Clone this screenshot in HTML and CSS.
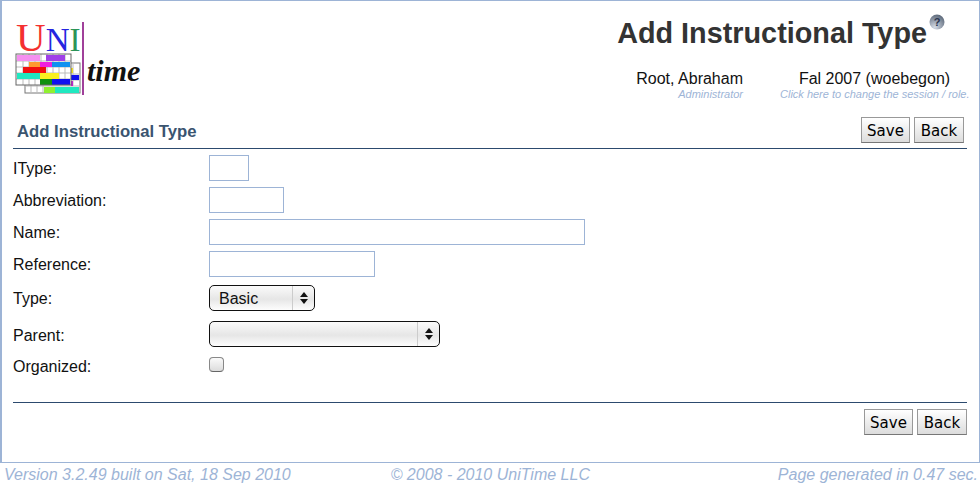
FILE: index.html
```html
<!DOCTYPE html>
<html lang="en">
<head>
    <meta charset="UTF-8">
    <title>Add Instructional Type</title>
    <link rel="stylesheet" href="styles.css">
</head>
<body>

    <div class="page">
        <!-- Header -->
        <div class="header">
            <svg class="logo" width="130" height="90" viewBox="14 10 130 90">
                <text x="16" y="51" class="logo-u">U</text>
                <text x="45.7" y="51" class="logo-n">N</text>
                <text x="69.6" y="51" class="logo-i">I</text>
                <line x1="83" y1="22" x2="83" y2="95" stroke="#a0409a" stroke-width="2"/>
                <!-- back grid -->
                <rect x="25" y="63" width="55" height="30" fill="#fff" stroke="#777"/>
                <path d="M25 86H80M25 74H80M25 80H80M31 85V93M37 85V93M43 85V93M73 63V86" stroke="#bbb" fill="none"/>
                <rect x="44" y="87" width="11" height="6" fill="#90f030"/>
                <rect x="55" y="87" width="24" height="6" fill="#20e8c0"/>
                <rect x="71" y="68" width="2" height="5" fill="#f0e020"/>
                <rect x="71" y="75" width="8" height="5" fill="#1010f0"/>
                <rect x="71" y="81" width="2" height="5" fill="#c020d0"/>
                <!-- front grid -->
                <rect x="16" y="54" width="55" height="31" fill="#fff"/>
                <path d="M16 61H71M16 67H71M16 73H71M16 79H71M23 54V85M29 54V85M35 54V85M41 54V85M47 54V85M53 54V85M59 54V85M65 54V85" stroke="#bbb" fill="none"/>
                <rect x="17" y="55" width="23" height="6" fill="#f58ff0"/>
                <rect x="46" y="55" width="19" height="6" fill="#a040e8"/>
                <rect x="29" y="62" width="11" height="5" fill="#ff9a30"/>
                <rect x="40" y="62" width="12" height="5" fill="#f020e0"/>
                <rect x="52" y="62" width="18" height="5" fill="#1090f0"/>
                <rect x="23" y="67" width="23" height="6" fill="#f01010"/>
                <rect x="17" y="73" width="23" height="6" fill="#20e8c0"/>
                <rect x="40" y="73" width="19" height="6" fill="#f8f020"/>
                <rect x="40" y="79" width="12" height="6" fill="#109010"/>
                <rect x="52" y="79" width="18" height="6" fill="#1010f0"/>
                <rect x="16" y="54" width="55" height="31" fill="none" stroke="#666"/>
                <text x="87" y="81" class="logo-time">time</text>
            </svg>
            <div class="header-right">
                <div class="title-row">
                    <h1>Add Instructional Type</h1>
                    <svg class="help" width="16" height="16" viewBox="0 0 16 16">
                        <defs>
                            <radialGradient id="ball" cx="35%" cy="85%" r="85%">
                                <stop offset="0" stop-color="#d4dbe6"/>
                                <stop offset="1" stop-color="#5f6b7c"/>
                            </radialGradient>
                        </defs>
                        <circle cx="8" cy="8" r="7.5" fill="url(#ball)"/>
                        <text x="8" y="12" class="help-mark">?</text>
                    </svg>
                </div>
                <div class="session-row">
                    <div class="who who-user">
                        <div class="who-name">Root, Abraham</div>
                        <div class="who-sub">Administrator</div>
                    </div>
                    <div class="who who-session">
                        <div class="who-name">Fal 2007 (woebegon)</div>
                        <div class="who-sub">Click here to change the session / role.</div>
                    </div>
                </div>
            </div>
        </div>

        <!-- Section title -->
        <div class="section-head">
            <h2>Add Instructional Type</h2>
            <div class="buttons">
                <button>Save</button>
                <button>Back</button>
            </div>
        </div>

        <!-- Form -->
        <div class="form">
            <label>IType:</label>
            <div class="field"><input type="text" class="w-itype"></div>
            <label>Abbreviation:</label>
            <div class="field"><input type="text" class="w-abbv"></div>
            <label>Name:</label>
            <div class="field"><input type="text" class="w-name"></div>
            <label>Reference:</label>
            <div class="field"><input type="text" class="w-ref"></div>
            <label class="label-type">Type:</label>
            <div class="field">
                <div class="select w-type"><span class="select-text">Basic</span><span class="select-arrows"><i class="up"></i><i class="down"></i></span></div>
            </div>
            <label class="label-parent">Parent:</label>
            <div class="field">
                <div class="select w-parent"><span class="select-text"></span><span class="select-arrows"><i class="up"></i><i class="down"></i></span></div>
            </div>
            <label class="label-org">Organized:</label>
            <div class="field"><span class="checkbox"></span></div>
        </div>

        <div class="form-foot">
            <div class="buttons">
                <button>Save</button>
                <button>Back</button>
            </div>
        </div>
    </div>

    <!-- Footer -->
    <div class="footer">
        <span>Version 3.2.49 built on Sat, 18 Sep 2010</span>
        <span class="footer-mid">© 2008 - 2010 UniTime LLC</span>
        <span>Page generated in 0.47 sec.</span>
    </div>

</body>
</html>
```

FILE: styles.css
```css
/* Global */
body { margin: 0; background: #fff; font-family: "Liberation Sans", Arial, sans-serif; font-size: 16px; color: #111; }

.page {
    height: 461px;
    border: 1px solid #9db4d6;
    border-width: 1px 1px 1px 2px;
    padding: 0 12px 0 11px;
    width: 954px;
}

/* Header */
.header { display: flex; justify-content: space-between; height: 115px; }
.logo { margin: 9px 0 0 1px; }
.logo-u { font: 41px "Liberation Serif", serif; fill: #f43030; }
.logo-n { font: 33px "Liberation Serif", serif; fill: #2525e0; }
.logo-i { font: 33px "Liberation Serif", serif; fill: #2c9458; }
.logo-time { font: italic bold 30px "Liberation Serif", serif; fill: #111; }

.header-right { display: flex; flex-direction: column; align-items: flex-end; }
.title-row { display: flex; align-items: flex-start; margin: 13px 22px 0 0; }
h1 { margin: 0; font-size: 28.8px; line-height: 38px; font-weight: bold; color: #333; }
.help { margin: 0 0 0 2px; }
.help-mark { font: bold 11px "Liberation Sans", sans-serif; fill: #2a3550; text-anchor: middle; }

.session-row { display: flex; margin: 18px 0 0; }
.who-user { width: 120px; text-align: right; }
.who-session { width: 189px; margin: 0 -2px 0 37px; text-align: center; white-space: nowrap; }
.who-name { font-size: 16px; line-height: 18px; color: #111; }
.who-sub { font-size: 11px; line-height: 13px; font-style: italic; color: #9db4d6; }

/* Section title */
.section-head {
    display: flex;
    justify-content: space-between;
    align-items: flex-start;
    height: 31px;
    padding-top: 1px;
    border-bottom: 1px solid #2c4a6e;
}
h2 { margin: 0 0 0 4px; font-size: 16.7px; line-height: 30px; font-weight: bold; color: #3a5470; }
.buttons { display: flex; gap: 4px; margin-right: 3px; }
button {
    width: 50px;
    height: 26px;
    padding: 2px 0 0;
    font-family: "DejaVu Sans", sans-serif;
    font-size: 15px;
    color: #000;
    background: linear-gradient(#ffffff, #dcdcdc);
    border: 1px solid #999;
    border-bottom-color: #777;
}
button:first-child { width: 49px; }

/* Form */
.form {
    display: grid;
    grid-template-columns: 196px 1fr;
    grid-auto-rows: 32px;
    padding-top: 5px;
    height: 248px;
    border-bottom: 1px solid #2c4a6e;
}
.form label { line-height: 30px; }
.form .label-type { line-height: 34px; }
.form .label-parent { line-height: 44px; }
.form .label-org { line-height: 42px; }
.field { display: flex; align-items: flex-start; }
.form input {
    box-sizing: border-box;
    height: 26px;
    margin: 1px 0 0;
    padding: 0;
    border: 1px solid #9db4d6;
    background: #fff;
    outline: none;
}
.w-itype { width: 40px; }
.w-abbv { width: 75px; }
.w-name { width: 376px; }
.w-ref { width: 166px; }

.select {
    box-sizing: border-box;
    display: flex;
    height: 26px;
    margin-top: 3px;
    border: 1px solid #111;
    border-radius: 5px;
    background: linear-gradient(#fafafa, #e6e6e6 55%, #fdfdfd);
}
.w-type { width: 106px; }
.w-parent { width: 231px; margin-top: 7px; }
.select-text { flex: 1; padding-left: 9px; line-height: 25px; }
.select-arrows {
    width: 21px;
    border-left: 1px solid #ccc;
    display: flex;
    flex-direction: column;
    align-items: center;
    justify-content: center;
    gap: 2px;
}
.up { border: 4px solid transparent; border-top: 0; border-bottom: 5px solid #111; }
.down { border: 4px solid transparent; border-bottom: 0; border-top: 5px solid #111; }

.checkbox {
    box-sizing: border-box;
    width: 15px;
    height: 15px;
    margin-top: 11px;
    border: 1px solid #888;
    border-bottom-color: #666;
    border-radius: 4px;
    background: linear-gradient(#fafafa, #dcdcdc);
}

.form-foot { display: flex; justify-content: flex-end; padding-top: 6px; }
.form-foot .buttons { margin-right: 0; }

/* Footer */
.footer {
    display: flex;
    justify-content: space-between;
    padding: 3px 2px 0 4px;
    font-size: 16px;
    line-height: 18px;
    font-style: italic;
    color: #9db4d6;
}
.footer-mid { margin-right: 88px; }
```
